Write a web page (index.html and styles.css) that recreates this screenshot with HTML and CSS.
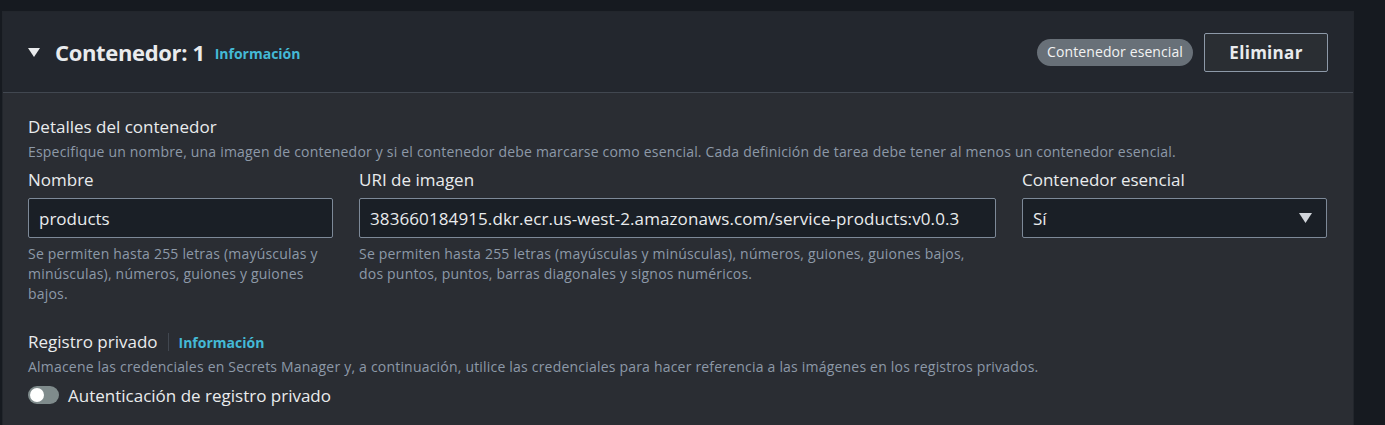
FILE: index.html
```html
<!DOCTYPE html>
<html lang="es">
<head>
<meta charset="utf-8">
<link rel="stylesheet" href="styles.css">
</head>
<body>
<div class="page">
  <section class="card">
    <header class="card-header">
      <div class="title-group">
        <svg class="caret" width="12" height="10" viewBox="0 0 12 10"><path d="M0 0 L12 0 L6 9 Z" fill="#e9ebed"/></svg>
        <h2 class="title">Contenedor: 1</h2>
        <a class="info-link">Información</a>
      </div>
      <div class="actions">
        <span class="badge">Contenedor esencial</span>
        <button class="btn">Eliminar</button>
      </div>
    </header>
    <div class="card-body">
      <div class="section-head">
        <div class="section-title">Detalles del contenedor</div>
        <div class="desc">Especifique un nombre, una imagen de contenedor y si el contenedor debe marcarse como esencial. Cada definición de tarea debe tener al menos un contenedor esencial.</div>
      </div>
      <div class="fields">
        <div class="field">
          <label class="label">Nombre</label>
          <div class="input">products</div>
          <div class="hint">Se permiten hasta 255 letras (mayúsculas y minúsculas), números, guiones y guiones bajos.</div>
        </div>
        <div class="field">
          <label class="label">URI de imagen</label>
          <div class="input uri">383660184915.dkr.ecr.us-west-2.amazonaws.com/service-products:v0.0.3</div>
          <div class="hint wide">Se permiten hasta 255 letras (mayúsculas y minúsculas), números, guiones, guiones bajos, dos puntos, puntos, barras diagonales y signos numéricos.</div>
        </div>
        <div class="field">
          <label class="label">Contenedor esencial</label>
          <div class="input select">
            <span>Sí</span>
            <svg width="13" height="11" viewBox="0 0 13 11"><path d="M0 0 L13 0 L6.5 10 Z" fill="#d1d5db"/></svg>
          </div>
        </div>
      </div>
      <div class="private">
        <div class="private-head">
          <span class="section-title">Registro privado</span>
          <span class="divider"></span>
          <a class="info-link small">Información</a>
        </div>
        <div class="desc">Almacene las credenciales en Secrets Manager y, a continuación, utilice las credenciales para hacer referencia a las imágenes en los registros privados.</div>
        <div class="toggle-row">
          <span class="toggle"><span class="knob"></span></span>
          <span class="toggle-label">Autenticación de registro privado</span>
        </div>
      </div>
    </div>
  </section>
</div>
</body>
</html>
```
FILE: styles.css
```css
* { box-sizing: border-box; }
html, body { margin: 0; padding: 0; }
body {
  background: #161a20;
  font-family: "Open Sans", "Noto Sans", sans-serif;
  color: #e9ebed;
  width: 1385px;
  height: 425px;
  overflow: hidden;
}
.page {
  padding: 12px 32px 0 3px;
}
.card {
  background: #2a2d33;
  box-shadow: 0 0 0 1px #22262c;
  height: 420px;
}
.card-header {
  background: #23272e;
  height: 81px;
  border-bottom: 1px solid #414750;
  display: flex;
  align-items: center;
  justify-content: space-between;
  padding: 0 25px 0 25px;
}
.title-group {
  display: flex;
  align-items: center;
}
.caret { margin-right: 15px; margin-top: 1px; }
.title {
  margin: 0;
  font-size: 22px;
  line-height: 28px;
  font-weight: 700;
  color: #e9ebed;
  letter-spacing: -0.35px;
}
.info-link {
  color: #44b9d6;
  font-weight: 700;
  font-size: 14px;
  margin-left: 10px;
  margin-top: 3px;
}
.info-link.small { margin: 0; font-size: 14px; }
.actions { display: flex; align-items: center; gap: 11px; }
.badge {
  background: #687078;
  color: #f2f3f3;
  font-size: 14px;
  letter-spacing: 0.1px;
  padding: 3px 10px 4px;
  border-radius: 14px;
  line-height: 20px;
}
.btn {
  font-family: inherit;
  background: #2a2e33;
  border: 1px solid #8d99a8;
  color: #e9ebed;
  font-weight: 700;
  font-size: 17px;
  letter-spacing: 0.3px;
  width: 124px;
  height: 39px;
  border-radius: 2px;
  padding: 0;
}
.card-body { padding: 22px 26px 0 25px; }
.section-title { font-size: 17px; line-height: 24px; color: #e9ebed; }
.desc { font-size: 14px; line-height: 20px; color: #8d99a8; margin-top: 3px; letter-spacing: 0.2px; }
.fields {
  display: grid;
  grid-template-columns: 305px 1fr 305px;
  column-gap: 26px;
  margin-top: 6px;
}
.field { display: flex; flex-direction: column; }
.label { font-size: 17px; line-height: 24px; color: #e9ebed; margin-bottom: 6px; }
.input {
  height: 40px;
  background: #1a1f26;
  border: 1px solid #7d8998;
  border-radius: 2px;
  padding: 0 10px;
  display: flex;
  align-items: center;
  font-size: 17px;
  color: #e9ebed;
}
.input.uri { letter-spacing: 0.1px; }
.select { justify-content: space-between; padding-right: 14px; }
.hint {
  font-size: 14px;
  line-height: 20px;
  color: #8d99a8;
  margin-top: 6px;
  letter-spacing: 0.2px;
}
.hint.wide { padding-right: 20px; }
.private { margin-top: 26px; }
.private-head { display: flex; align-items: center; }
.divider { width: 1px; height: 18px; background: #414750; margin: 0 10px; }
.toggle-row { display: flex; align-items: center; margin-top: 6px; height: 24px; }
.toggle {
  width: 31px;
  height: 18px;
  border-radius: 9px;
  background: #7f8b8c;
  position: relative;
  display: inline-block;
}
.knob {
  position: absolute;
  left: 2px;
  top: 2px;
  width: 14px;
  height: 14px;
  border-radius: 50%;
  background: #fff;
}
.toggle-label { font-size: 17px; margin-left: 9px; color: #e9ebed; }
```
